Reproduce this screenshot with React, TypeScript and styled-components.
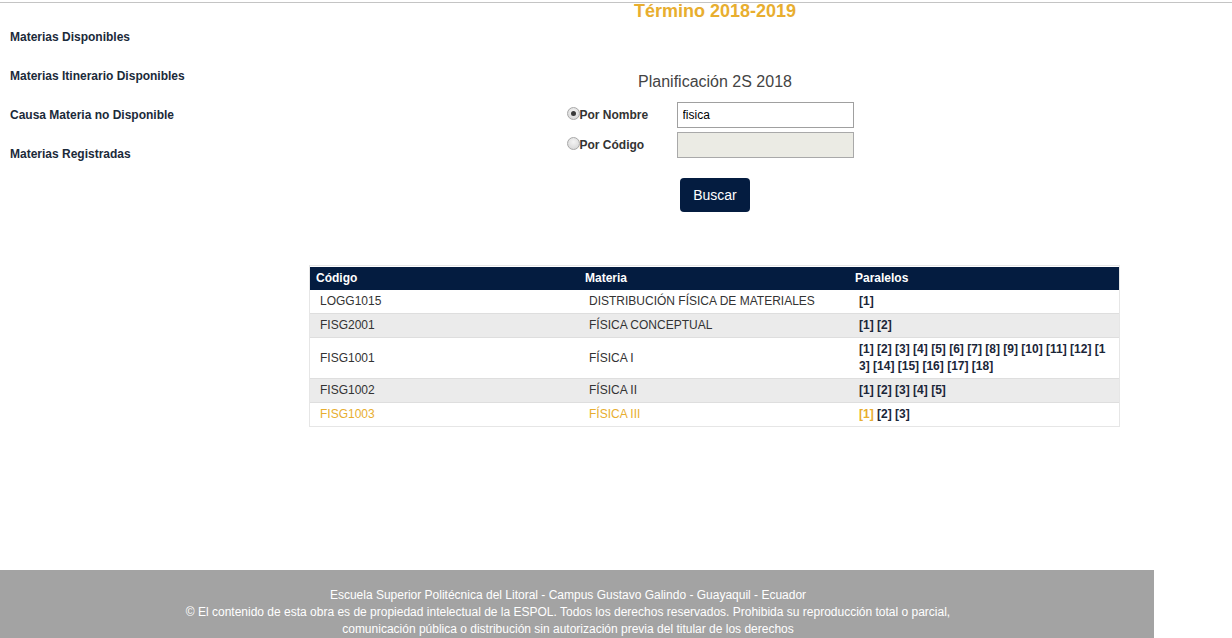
import React from "react";
import styled, { createGlobalStyle } from "styled-components";

const Global = createGlobalStyle`
  html, body { margin: 0; padding: 0; background: #fff; }
  body { font-family: "Liberation Sans", Arial, sans-serif; font-size: 12px; color: #333; }
  * { box-sizing: border-box; }
`;

const NAVY = "#041c40";
const GOLD = "#e8ae2f";

const TopRule = styled.div`
  margin-top: 2px;
  height: 1px;
  background: #c4c4c4;
`;

const Content = styled.div`
  display: flex;
  min-height: 567px;
`;

const Sidebar = styled.nav`
  width: 200px;
  flex: none;
  padding: 27px 0 0 10px;
  display: flex;
  flex-direction: column;
  gap: 24px;
`;

const SideLink = styled.a`
  font-size: 12px;
  line-height: 15px;
  font-weight: bold;
  color: #1b2a3a;
  text-decoration: none;
  white-space: nowrap;
`;

const Main = styled.main`
  flex: 1;
  display: flex;
  flex-direction: column;
  align-items: center;
  padding-right: 2px;
`;

const Term = styled.h1`
  margin: 0;
  font-size: 18px;
  line-height: 16px;
  font-weight: bold;
  color: ${GOLD};
`;

const Plan = styled.h2`
  margin: 53px 0 0;
  font-size: 16px;
  line-height: 20px;
  font-weight: normal;
  color: #444;
`;

const Form = styled.div`
  margin-top: 10px;
  display: grid;
  grid-template-columns: 110px 177px;
  row-gap: 4px;
  padding-right: 10px;
`;

const RadioLabel = styled.label`
  display: flex;
  align-items: center;
  font-size: 12px;
  line-height: 15px;
  font-weight: bold;
  color: #333;
`;

const Radio = styled.input.attrs({ type: "radio" })`
  appearance: none;
  width: 13px;
  height: 13px;
  margin: -4px 0 0 0;
  border-radius: 50%;
  border: 1px solid #a8a8a8;
  background: radial-gradient(circle at 50% 35%, #f4f4f4 0%, #d2d2d2 100%);
  position: relative;
  flex: none;
  &:checked::after {
    content: "";
    position: absolute;
    left: 3px;
    top: 3px;
    width: 5px;
    height: 5px;
    border-radius: 50%;
    background: #3a3a3a;
  }
`;

const TextInput = styled.input<{ $disabled?: boolean }>`
  height: 26px;
  width: 177px;
  border: 1px solid ${(p) => (p.$disabled ? "#a9a9a9" : "#a0a0a0")};
  background: ${(p) => (p.$disabled ? "#ebebe4" : "#fff")};
  padding: 0 5px;
  font-family: "Liberation Sans", Arial, sans-serif;
  font-size: 12px;
  color: #000;
  outline: none;
`;

const Button = styled.button`
  margin-top: 20px;
  height: 34px;
  padding: 0 13px;
  border: none;
  border-radius: 4px;
  background: ${NAVY};
  color: #fff;
  font-family: "Liberation Sans", Arial, sans-serif;
  font-size: 14px;
  cursor: pointer;
`;

const TableBox = styled.div`
  margin-top: 53px;
  width: 811px;
  border: 1px solid #e6e6e6;
  padding-top: 1px;
  margin-left: -1px;
`;

const Table = styled.table`
  width: 809px;
  border-collapse: collapse;
  table-layout: fixed;
`;

const Th = styled.th`
  background: ${NAVY};
  color: #fff;
  font-weight: bold;
  font-size: 12px;
  line-height: 17px;
  padding: 3px 6px;
  text-align: left;
`;

const Tr = styled.tr<{ $alt?: boolean }>`
  background: ${(p) => (p.$alt ? "#ebebeb" : "#fff")};
  border-top: 1px solid #dedede;
  &:first-child { border-top: none; }
`;

const Td = styled.td<{ $hl?: boolean }>`
  padding: 3px 10px;
  font-size: 12px;
  line-height: 17px;
  color: ${(p) => (p.$hl ? GOLD : "#333")};
  vertical-align: middle;
`;

const ParCell = styled(Td)`
  word-break: break-all;
`;

const Par = styled.a<{ $hl?: boolean }>`
  font-weight: bold;
  color: ${(p) => (p.$hl ? GOLD : "#1b2638")};
  text-decoration: none;
`;

const Footer = styled.footer`
  width: 1154px;
  background: #a3a3a3;
  color: #fff;
  font-size: 12px;
  line-height: 17px;
  text-align: center;
  padding: 17px 18px 8px 0;
`;

const rows = [
  { code: "LOGG1015", name: "DISTRIBUCIÓN FÍSICA DE MATERIALES", n: 1 },
  { code: "FISG2001", name: "FÍSICA CONCEPTUAL", n: 2 },
  { code: "FISG1001", name: "FÍSICA I", n: 18 },
  { code: "FISG1002", name: "FÍSICA II", n: 5 },
  { code: "FISG1003", name: "FÍSICA III", n: 3, hl: true },
];

export default function App() {
  return (
    <>
      <Global />
      <TopRule />
      <Content>
        <Sidebar>
          <SideLink href="#">Materias Disponibles</SideLink>
          <SideLink href="#">Materias Itinerario Disponibles</SideLink>
          <SideLink href="#">Causa Materia no Disponible</SideLink>
          <SideLink href="#">Materias Registradas</SideLink>
        </Sidebar>
        <Main>
          <Term>Término 2018-2019</Term>
          <Plan>Planificación 2S 2018</Plan>
          <Form>
            <RadioLabel>
              <Radio name="modo" defaultChecked />
              Por Nombre
            </RadioLabel>
            <TextInput defaultValue="fisica" />
            <RadioLabel>
              <Radio name="modo" />
              Por Código
            </RadioLabel>
            <TextInput $disabled disabled />
          </Form>
          <Button>Buscar</Button>
          <TableBox>
            <Table>
              <colgroup>
                <col style={{ width: 269 }} />
                <col style={{ width: 270 }} />
                <col style={{ width: 270 }} />
              </colgroup>
              <thead>
                <tr>
                  <Th>Código</Th>
                  <Th>Materia</Th>
                  <Th>Paralelos</Th>
                </tr>
              </thead>
              <tbody>
                {rows.map((r, i) => (
                  <Tr key={r.code} $alt={i % 2 === 1}>
                    <Td $hl={r.hl}>{r.code}</Td>
                    <Td $hl={r.hl}>{r.name}</Td>
                    <ParCell>
                      {Array.from({ length: r.n }, (_, k) => (
                        <React.Fragment key={k}>
                          {k > 0 ? " " : ""}
                          <Par href="#" $hl={r.hl && k === 0}>[{k + 1}]</Par>
                        </React.Fragment>
                      ))}
                    </ParCell>
                  </Tr>
                ))}
              </tbody>
            </Table>
          </TableBox>
        </Main>
      </Content>
      <Footer>
        Escuela Superior Politécnica del Litoral - Campus Gustavo Galindo - Guayaquil - Ecuador
        <br />
        © El contenido de esta obra es de propiedad intelectual de la ESPOL. Todos los derechos reservados. Prohibida su reproducción total o parcial,
        <br />
        comunicación pública o distribución sin autorización previa del titular de los derechos
      </Footer>
    </>
  );
}
